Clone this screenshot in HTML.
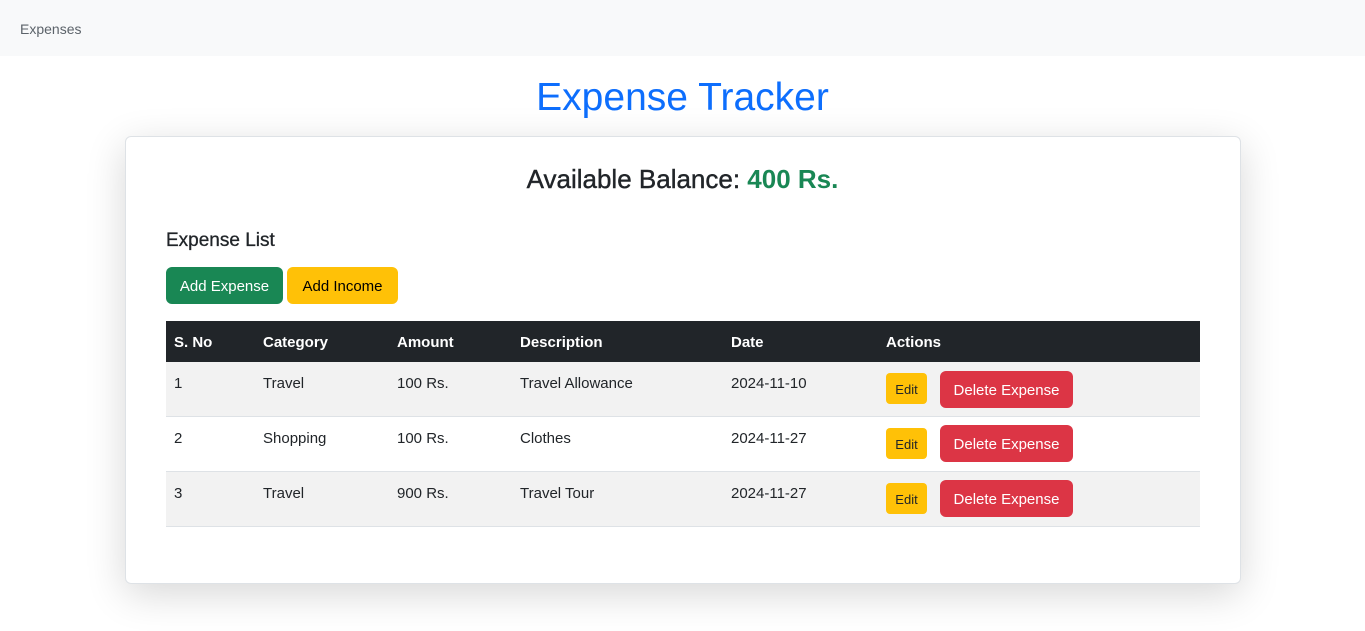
<!DOCTYPE html>
<html><head><style>
body{margin:0;width:1365px;height:631px;background:#fff;font-family:"Liberation Sans",sans-serif;color:#212529;position:relative;overflow:hidden}
.a{position:absolute;white-space:nowrap}
.nav{position:absolute;left:0;top:0;width:1365px;height:56px;background:#f8f9fa}
.card{position:absolute;left:125px;top:136px;width:1114px;height:446px;border:1px solid #dee2e6;border-radius:6px;box-shadow:0 10px 40px rgba(0,0,0,.16);background:#fff}
.btn{position:absolute;border-radius:6px;font-size:15px;display:flex;align-items:center;justify-content:center;padding-top:2px;box-sizing:border-box}
.row{position:absolute;left:166px;width:1034px;height:54px;border-bottom:1px solid #dee2e6}
.c{position:absolute;top:13px;font-size:15px}
</style></head><body>
<div class="nav"></div>
<div class="a" style="left:20px;top:21px;font-size:14px;color:#5c636a">Expenses</div>
<div class="a" style="left:0;width:1365px;text-align:center;top:76px;font-size:39px;color:#0d6efd">Expense Tracker</div>
<div class="card"></div>
<div class="a" style="left:0;width:1365px;text-align:center;top:164px;font-size:26px;font-weight:500;-webkit-text-stroke:0.4px #212529">Available Balance: <b style="color:#198754;-webkit-text-stroke:0">400 Rs.</b></div>
<div class="a" style="left:166px;top:230px;font-size:19px;-webkit-text-stroke:0.3px #212529">Expense List</div>
<div class="btn" style="left:166px;top:267px;width:117px;height:37px;background:#198754;color:#fff">Add Expense</div>
<div class="btn" style="left:287px;top:267px;width:111px;height:37px;background:#ffc107;color:#000">Add Income</div>
<div class="a" style="left:166px;top:321px;width:1034px;height:41px;background:#212529;color:#fff;font-weight:bold;font-size:15px">
<span class="a" style="left:8px;top:13px">S. No</span><span class="a" style="left:97px;top:13px">Category</span><span class="a" style="left:231px;top:13px">Amount</span><span class="a" style="left:354px;top:13px">Description</span><span class="a" style="left:565px;top:13px">Date</span><span class="a" style="left:720px;top:13px">Actions</span></div>
<div class="row" style="top:362px;background:#f2f2f2"><span class="c" style="left:8px">1</span><span class="c" style="left:97px">Travel</span><span class="c" style="left:231px">100 Rs.</span><span class="c" style="left:354px">Travel Allowance</span><span class="c" style="left:565px">2024-11-10</span>
<div class="btn" style="left:720px;top:11px;width:41px;height:31px;background:#ffc107;font-size:13px;border-radius:4px">Edit</div><div class="btn" style="left:774px;top:9px;width:133px;height:37px;background:#dc3545;color:#fff">Delete Expense</div></div>
<div class="row" style="top:417px"><span class="c" style="left:8px">2</span><span class="c" style="left:97px">Shopping</span><span class="c" style="left:231px">100 Rs.</span><span class="c" style="left:354px">Clothes</span><span class="c" style="left:565px">2024-11-27</span>
<div class="btn" style="left:720px;top:11px;width:41px;height:31px;background:#ffc107;font-size:13px;border-radius:4px">Edit</div><div class="btn" style="left:774px;top:8px;width:133px;height:37px;background:#dc3545;color:#fff">Delete Expense</div></div>
<div class="row" style="top:472px;background:#f2f2f2"><span class="c" style="left:8px">3</span><span class="c" style="left:97px">Travel</span><span class="c" style="left:231px">900 Rs.</span><span class="c" style="left:354px">Travel Tour</span><span class="c" style="left:565px">2024-11-27</span>
<div class="btn" style="left:720px;top:11px;width:41px;height:31px;background:#ffc107;font-size:13px;border-radius:4px">Edit</div><div class="btn" style="left:774px;top:8px;width:133px;height:37px;background:#dc3545;color:#fff">Delete Expense</div></div>
</body></html>
